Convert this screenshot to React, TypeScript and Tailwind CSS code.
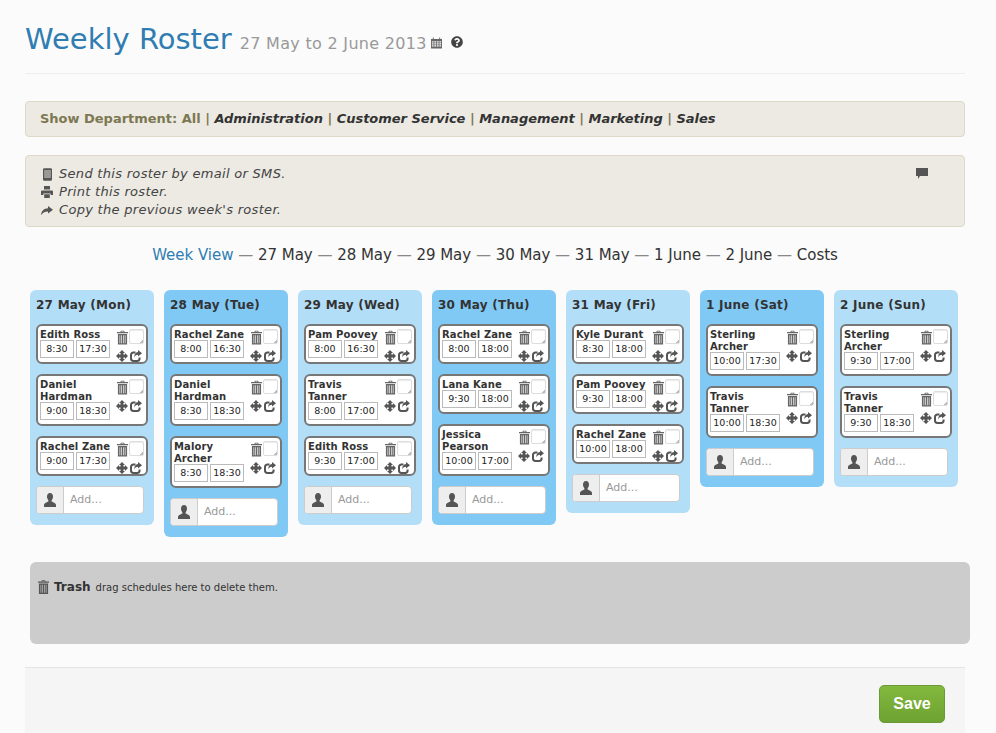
import React from "react";
import {FaQuestionCircle} from "react-icons/fa";

type Shift = {name: string; start: string; end: string};
type Day = {title: string; dark?: boolean; shifts: Shift[]};
type IconProps = {className?: string};

const days: Day[] = [
  {
    title: "27 May (Mon)",
    shifts: [
      {name: "Edith Ross", start: "8:30", end: "17:30"},
      {name: "Daniel\nHardman", start: "9:00", end: "18:30"},
      {name: "Rachel Zane", start: "9:00", end: "17:30"},
    ],
  },
  {
    title: "28 May (Tue)",
    dark: true,
    shifts: [
      {name: "Rachel Zane", start: "8:00", end: "16:30"},
      {name: "Daniel\nHardman", start: "8:30", end: "18:30"},
      {name: "Malory\nArcher", start: "8:30", end: "18:30"},
    ],
  },
  {
    title: "29 May (Wed)",
    shifts: [
      {name: "Pam Poovey", start: "8:00", end: "16:30"},
      {name: "Travis\nTanner", start: "8:00", end: "17:00"},
      {name: "Edith Ross", start: "9:30", end: "17:00"},
    ],
  },
  {
    title: "30 May (Thu)",
    dark: true,
    shifts: [
      {name: "Rachel Zane", start: "8:00", end: "18:00"},
      {name: "Lana Kane", start: "9:30", end: "18:00"},
      {name: "Jessica\nPearson", start: "10:00", end: "17:00"},
    ],
  },
  {
    title: "31 May (Fri)",
    shifts: [
      {name: "Kyle Durant", start: "8:30", end: "18:00"},
      {name: "Pam Poovey", start: "9:30", end: "18:00"},
      {name: "Rachel Zane", start: "10:00", end: "18:00"},
    ],
  },
  {
    title: "1 June (Sat)",
    dark: true,
    shifts: [
      {name: "Sterling\nArcher", start: "10:00", end: "17:30"},
      {name: "Travis\nTanner", start: "10:00", end: "18:30"},
    ],
  },
  {
    title: "2 June (Sun)",
    shifts: [
      {name: "Sterling\nArcher", start: "9:30", end: "17:00"},
      {name: "Travis\nTanner", start: "9:30", end: "18:30"},
    ],
  },
];

const weekLinks = ["27 May", "28 May", "29 May", "30 May", "31 May", "1 June", "2 June", "Costs"];
const departments = ["Administration", "Customer Service", "Management", "Marketing", "Sales"];

// old font-awesome style icons, drawn by hand
const TrashIcon = ({className}: IconProps) => (
  <svg viewBox="0 0 12 15" className={className} fill="currentColor">
    <path d="M4.2 0h3.6l.5 1.4H12v1.5H0V1.4h3.7zM5 .9l-.2.5h2.4L7 .9z" fillRule="evenodd" />
    <path d="M1 3.6h10V15H1zM2.8 5v8.8h.7V5zM4.7 5v8.8h.7V5zM6.6 5v8.8h.7V5zM8.5 5v8.8h.7V5z" fillRule="evenodd" />
  </svg>
);

const CalendarIcon = ({className}: IconProps) => (
  <svg viewBox="0 0 12 12" className={className} fill="currentColor">
    <path
      fillRule="evenodd"
      d="M0 1.5h2V0h1v1.5h6V0h1v1.5h2V12H0zM1 4v1.4h1.8V4zM3.6 4v1.4h2V4zM6.4 4v1.4h2V4zM9.2 4v1.4H11V4zM1 6.2v1.4h1.8V6.2zM3.6 6.2v1.4h2V6.2zM6.4 6.2v1.4h2V6.2zM9.2 6.2v1.4H11V6.2zM1 8.4v1.4h1.8V8.4zM3.6 8.4v1.4h2V8.4zM6.4 8.4v1.4h2V8.4zM9.2 8.4v1.4H11V8.4z"
    />
  </svg>
);

const MoveIcon = ({className}: IconProps) => (
  <svg viewBox="0 0 12 12" className={className} fill="currentColor">
    <path d="M6 0L9 3H7.4V4.6H9V3L12 6L9 9V7.4H7.4V9H9L6 12L3 9H4.6V7.4H3V9L0 6L3 3V4.6H4.6V3H3Z" />
  </svg>
);

const ShareBoxIcon = ({className}: IconProps) => (
  <svg viewBox="0 0 12 12" className={className} fill="currentColor">
    <path d="M5.5 2.6H3.4a2.4 2.4 0 0 0-2.4 2.4V8.6A2.4 2.4 0 0 0 3.4 11h3.8a2.4 2.4 0 0 0 2.4-2.4V7.4" fill="none" stroke="currentColor" strokeWidth="2" />
    <path d="M8 0L12 3.2L8 6.4V4.7C6 4.7 4.8 5.5 4.2 7.6C4.2 4.5 5.6 2 8 1.9Z" />
  </svg>
);

const MobileIcon = ({className}: IconProps) => (
  <svg viewBox="0 0 10 14" className={className} fill="currentColor">
    <path fillRule="evenodd" d="M1.5 0h7A1.5 1.5 0 0 1 10 1.5v11A1.5 1.5 0 0 1 8.5 14h-7A1.5 1.5 0 0 1 0 12.5v-11A1.5 1.5 0 0 1 1.5 0zM1.5 2v8.5h7V2z" />
    <path d="M1.5 2h7v8.5h-7z" opacity="0.55" />
  </svg>
);

const PrintIcon = ({className}: IconProps) => (
  <svg viewBox="0 0 12 12" className={className} fill="currentColor">
    <path d="M3 0h6v3.5H3zM1 4.5h10a1 1 0 0 1 1 1V9H9.6V7.4H2.4V9H0V5.5a1 1 0 0 1 1-1zM3.2 8.2h5.6V12H3.2z" />
  </svg>
);

const ArrowIcon = ({className}: IconProps) => (
  <svg viewBox="0 0 12 9" className={className} fill="currentColor">
    <path d="M7 0L12 3.8L7 7.6V5.4C4 5.4 2 6.5 0 9C.5 5 3 2.4 7 2.3Z" />
  </svg>
);

const UserIcon = ({className}: IconProps) => (
  <svg viewBox="0 0 12 14" className={className} fill="currentColor">
    <path d="M6 0C8 0 9 1.6 9 3.6C9 5.4 8.3 6.6 7.6 7.4V8.6C9 9.4 12 10.2 12 12V14H0V12C0 10.2 3 9.4 4.4 8.6V7.4C3.7 6.6 3 5.4 3 3.6C3 1.6 4 0 6 0Z" />
  </svg>
);

const CommentIcon = ({className}: IconProps) => (
  <svg viewBox="0 0 12 11" className={className} fill="currentColor">
    <path d="M0 0H12V8H4L2 11V8H0Z" />
  </svg>
);

const ShiftCard = ({shift}: {shift: Shift}) => (
  <div className="flex w-[112px] justify-between rounded-[6px] border-2 border-[#777777] bg-white px-[2px]">
    <div className="w-[70px] pb-[4px] pt-[2px]">
      <div className="translate-y-px whitespace-pre text-[10px] font-bold leading-[12px] tracking-[0.1px] text-[#333333]">{shift.name}</div>
      <div className="flex gap-[2px]">
        <span className="flex h-[18px] w-[34px] items-center justify-center border border-[#bbbbbb] text-[9.5px] text-[#222222]">{shift.start}</span>
        <span className="flex h-[18px] w-[34px] items-center justify-center border border-[#bbbbbb] text-[9.5px] text-[#222222]">{shift.end}</span>
      </div>
    </div>
    <div className="w-[28px] shrink-0 pt-[3px] text-[#555555]">
      <div className="flex items-start justify-between">
        <TrashIcon className="ml-px mt-px h-[15px] w-[11px] text-[#666666]" />
        <div className="h-[15px] w-[15px] rounded-[2px] border border-[#dddddd] bg-[linear-gradient(135deg,#ffffff_85%,#bbbbbb_85%)] shadow-[inset_0_1px_1px_rgba(0,0,0,0.08)]" />
      </div>
      <div className="mt-[5px] flex items-center gap-[2px]">
        <MoveIcon className="h-[12px] w-[12px]" />
        <ShareBoxIcon className="h-[12px] w-[12px]" />
      </div>
    </div>
  </div>
);

const AddBox = () => (
  <div className="flex h-[28px] w-[108px] overflow-hidden rounded-[4px] border border-[#cccccc] bg-white">
    <span className="flex w-[27px] items-center justify-center border-r border-[#cccccc] bg-[#eeeeee] text-[#555555]">
      <UserIcon className="h-[14px] w-[12px]" />
    </span>
    <span className="flex items-center pl-[6px] text-[11px] text-[#999999]">Add...</span>
  </div>
);

const DayColumn = ({day}: {day: Day}) => (
  <div className={`w-[124px] rounded-[6px] px-[6px] pb-[11px] pt-[7px] ${day.dark ? "bg-[#81c9f5]" : "bg-[#b3def7]"}`}>
    <h3 className="text-[12px] font-bold leading-[16px] tracking-[0.25px] text-[#333333]">{day.title}</h3>
    <div className="mt-[11px] flex flex-col gap-[10px]">
      {day.shifts.map((shift) => (
        <ShiftCard key={shift.name + shift.start} shift={shift} />
      ))}
      <AddBox />
    </div>
  </div>
);

const ActionRow = ({icon, text}: {icon: React.ReactNode; text: string}) => (
  <div className="flex items-center">
    <span className="flex w-[18px] shrink-0 items-center justify-center pr-[6px] text-[#555555]">{icon}</span>
    {text}
  </div>
);

const App = () => {
  return (
    <div className="h-[733px] overflow-hidden bg-[#fbfbfb] font-['DejaVu_Sans',Verdana,sans-serif]">
      <div className="mx-[25px] w-[940px]">
        {/* title */}
        <div className="flex h-[74px] items-baseline border-b border-[#eeeeee] pt-[19px]">
          <h1 className="text-[29px] font-normal leading-[40px] text-[#2f7db2]">Weekly Roster</h1>
          <span className="ml-[8px] text-[16px] tracking-[0.3px] text-[#999999]">27 May to 2 June 2013</span>
          <CalendarIcon className="ml-[4px] mt-[18px] h-[12px] w-[11px] self-start text-[#666666]" />
          <FaQuestionCircle className="ml-[9px] mt-[17px] h-[12px] w-[12px] self-start text-[#444444]" />
        </div>

        {/* department filter */}
        <div className="mt-[27px] flex h-[36px] items-center rounded-[4px] border border-[#ddd8c8] bg-[#eceae3] px-[14px] text-[13px] font-bold tracking-[-0.015px] text-[#7d7852]">
          <span className="whitespace-pre">Show Department: All</span>
          {departments.map((d) => (
            <span key={d} className="whitespace-pre">
              {" | "}
              <em className="text-[#333333]">{d}</em>
            </span>
          ))}
        </div>

        {/* actions */}
        <div className="mt-[18px] flex h-[72px] justify-between rounded-[4px] border border-[#ddd8c8] bg-[#eceae3] pl-[15px] pr-[36px] pt-[9px] text-[13px] italic leading-[18px] tracking-[0.3px] text-[#444444]">
          <div>
            <ActionRow icon={<MobileIcon className="h-[13px] w-[9px]" />} text="Send this roster by email or SMS." />
            <ActionRow icon={<PrintIcon className="h-[12px] w-[12px]" />} text="Print this roster." />
            <ActionRow icon={<ArrowIcon className="h-[9px] w-[12px]" />} text="Copy the previous week's roster." />
          </div>
          <CommentIcon className="mt-[3px] h-[11px] w-[12px] text-[#555555]" />
        </div>

        {/* week links */}
        <div className="mt-[18px] text-center text-[15px] leading-[20px] tracking-[-0.02px] text-[#333333]">
          <span className="text-[#2f7db2]">Week View</span>
          {weekLinks.map((w) => (
            <span key={w}>
              <span className="text-[#888888]"> — </span>
              {w}
            </span>
          ))}
        </div>

        {/* roster */}
        <div className="mt-[25px] flex h-[272px] items-start gap-[10px] pl-[5px]">
          {days.map((day) => (
            <DayColumn key={day.title} day={day} />
          ))}
        </div>
      </div>

      {/* trash */}
      <div className="ml-[30px] h-[82px] w-[940px] rounded-[6px] bg-[#cccccc] pl-[8px] pt-[16px]">
        <div className="flex items-center text-[#333333]">
          <TrashIcon className="h-[14px] w-[11px] text-[#555555]" />
          <span className="ml-[5px] text-[12px] font-bold">Trash</span>
          <span className="ml-[5px] text-[10px]">drag schedules here to delete them.</span>
        </div>
      </div>

      {/* footer */}
      <div className="ml-[25px] mt-[23px] flex h-[70px] w-[940px] justify-end border-t border-[#e5e5e5] bg-[#f5f5f5] pr-[20px] pt-[17px]">
        <button className="h-[38px] w-[66px] rounded-[5px] border border-[#6a9a33] bg-gradient-to-b from-[#82b93e] to-[#6ea232] font-['Liberation_Sans',Arial,sans-serif] text-[16px] font-bold text-white">
          Save
        </button>
      </div>
    </div>
  );
};

export default App;
